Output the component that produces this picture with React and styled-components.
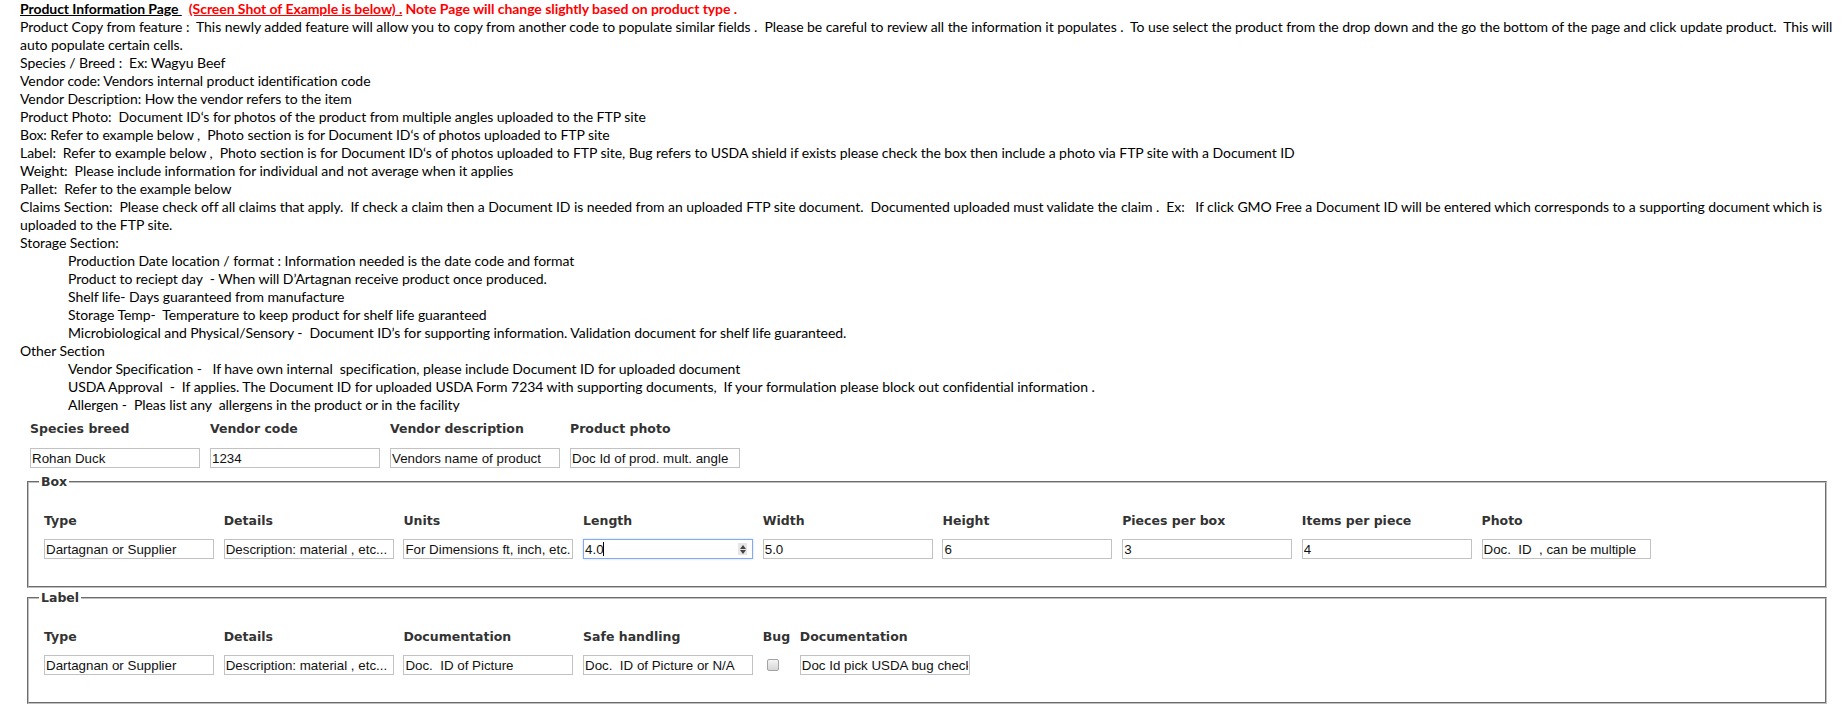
import React from 'react'
import styled, { createGlobalStyle } from 'styled-components';

const GlobalStyle = createGlobalStyle`
  html, body {
    margin: 0;
    padding: 0;
    background: #fff;
  }
  body {
    overflow: hidden;
  }
`;

const Page = styled.div`
  width: 1842px;
  box-sizing: border-box;
  padding-left: 20px;
`;

const Notes = styled.div`
  font-family: Lato, "Open Sans", sans-serif;
  font-size: 14px;
  line-height: 18px;
  letter-spacing: -0.06px;
  color: #000;
`;

const Line = styled.div`
  white-space: pre;
  padding-left: ${p => (p.$indent ? '48px' : '0')};
`;

const Title = styled.span`
  font-weight: 700;
  text-decoration: underline;
`;

const Warn = styled.span`
  font-weight: 700;
  color: #ff0000;
  text-decoration: ${p => (p.$under ? 'underline' : 'none')};
`;

const FieldLabel = styled.div`
  font-family: "DejaVu Sans", Verdana, sans-serif;
  font-weight: 700;
  font-size: 12.5px;
  line-height: 18px;
  color: #333;
  white-space: nowrap;
`;

const TopRow = styled.div`
  display: flex;
  gap: 10px;
  margin: 6px 0 0 10px;
`;

const Column = styled.div`
  display: flex;
  flex-direction: column;
  gap: ${p => p.$gap}px;
`;

const TextInput = styled.input`
  box-sizing: border-box;
  width: 170px;
  height: 20px;
  margin: 0;
  padding: 1px 1px;
  border: 1px solid #c2c2c2;
  border-radius: 0;
  background: #fff;
  font-family: "Liberation Sans", Arial, sans-serif;
  font-size: 13.33px;
  color: #111;
  outline: none;
`;

const FocusWrap = styled.div`
  position: relative;
  width: 170px;
  height: 20px;
`;

const FocusInput = styled(TextInput)`
  border-color: #86aaf0;
  box-shadow: 0 0 2px #bcd2f8;
`;

const Caret = styled.span`
  position: absolute;
  left: 20px;
  top: 3px;
  width: 1px;
  height: 14px;
  background: #000;
`;

const Spinner = styled.div`
  position: absolute;
  right: 6px;
  top: 4px;
  width: 9px;
  height: 12px;
  background: #e6e6e6;
  display: flex;
  flex-direction: column;
  align-items: center;
  justify-content: center;
  gap: 1px;
`;

const Arrow = styled.span`
  width: 0;
  height: 0;
  border-left: 3px solid transparent;
  border-right: 3px solid transparent;
  ${p => (p.$down ? 'border-top: 4px solid #444;' : 'border-bottom: 4px solid #444;')}
`;

const Group = styled.fieldset`
  margin: ${p => p.$top}px 15px 0 7px;
  padding: 0 10px;
  border: 2px groove #c0c0c0;
  min-width: 0;
`;

const Legend = styled.legend`
  padding: 0 2px;
  font-family: "DejaVu Sans", Verdana, sans-serif;
  font-weight: 700;
  font-size: 12.5px;
  line-height: 16px;
  color: #333;
`;

const FieldRow = styled.div`
  display: flex;
  gap: 9.7px;
  padding: 22px 0 27px 5px;
`;

const CheckCell = styled.div`
  height: 20px;
  display: flex;
  align-items: center;
  padding-left: 4px;
`;

const Check = styled.input`
  appearance: none;
  box-sizing: border-box;
  width: 12px;
  height: 12px;
  margin: 0;
  border: 1px solid #a3a3a3;
  border-radius: 2px;
  background: linear-gradient(#f4f4f4, #d6d6d6);
`;

const notes = [
  { text: 'Product Copy from feature :  This newly added feature will allow you to copy from another code to populate similar fields .  Please be careful to review all the information it populates .  To use select the product from the drop down and the go the bottom of the page and click update product.  This will' },
  { text: 'auto populate certain cells.' },
  { text: 'Species / Breed :  Ex: Wagyu Beef' },
  { text: 'Vendor code: Vendors internal product identification code' },
  { text: 'Vendor Description: How the vendor refers to the item' },
  { text: 'Product Photo:  Document ID‘s for photos of the product from multiple angles uploaded to the FTP site' },
  { text: 'Box: Refer to example below ,  Photo section is for Document ID‘s of photos uploaded to FTP site' },
  { text: 'Label:  Refer to example below ,  Photo section is for Document ID‘s of photos uploaded to FTP site, Bug refers to USDA shield if exists please check the box then include a photo via FTP site with a Document ID' },
  { text: 'Weight:  Please include information for individual and not average when it applies' },
  { text: 'Pallet:  Refer to the example below' },
  { text: 'Claims Section:  Please check off all claims that apply.  If check a claim then a Document ID is needed from an uploaded FTP site document.  Documented uploaded must validate the claim .  Ex:   If click GMO Free a Document ID will be entered which corresponds to a supporting document which is' },
  { text: 'uploaded to the FTP site.' },
  { text: 'Storage Section:' },
  { text: 'Production Date location / format : Information needed is the date code and format', indent: true },
  { text: 'Product to reciept day  - When will D’Artagnan receive product once produced.', indent: true },
  { text: 'Shelf life- Days guaranteed from manufacture', indent: true },
  { text: 'Storage Temp-  Temperature to keep product for shelf life guaranteed', indent: true },
  { text: 'Microbiological and Physical/Sensory -  Document ID’s for supporting information. Validation document for shelf life guaranteed.', indent: true },
  { text: 'Other Section' },
  { text: 'Vendor Specification -   If have own internal  specification, please include Document ID for uploaded document', indent: true },
  { text: 'USDA Approval  -  If applies. The Document ID for uploaded USDA Form 7234 with supporting documents,  If your formulation please block out confidential information .', indent: true },
  { text: 'Allergen -  Pleas list any  allergens in the product or in the facility', indent: true },
];

const topFields = [
  { label: 'Species breed', value: 'Rohan Duck' },
  { label: 'Vendor code', value: '1234' },
  { label: 'Vendor description', value: 'Vendors name of product' },
  { label: 'Product photo', value: 'Doc Id of prod. mult. angle' },
];

const boxFields = [
  { label: 'Type', value: 'Dartagnan or Supplier' },
  { label: 'Details', value: 'Description: material , etc...' },
  { label: 'Units', value: 'For Dimensions ft, inch, etc..' },
  { label: 'Length', value: '4.0', focused: true },
  { label: 'Width', value: '5.0' },
  { label: 'Height', value: '6' },
  { label: 'Pieces per box', value: '3' },
  { label: 'Items per piece', value: '4' },
  { label: 'Photo', value: 'Doc.  ID  , can be multiple', width: 169 },
];

const labelFields = [
  { label: 'Type', value: 'Dartagnan or Supplier' },
  { label: 'Details', value: 'Description: material , etc...' },
  { label: 'Documentation', value: 'Doc.  ID of Picture' },
  { label: 'Safe handling', value: 'Doc.  ID of Picture or N/A' },
  { label: 'Bug', check: true },
  { label: 'Documentation', value: 'Doc Id pick USDA bug check', width: 170 },
];

function Field({ field, gap }) {
  let control;
  if (field.check) {
    control = (
      <CheckCell>
        <Check type="checkbox" readOnly />
      </CheckCell>
    );
  } else if (field.focused) {
    control = (
      <FocusWrap>
        <FocusInput defaultValue={field.value} />
        <Caret />
        <Spinner>
          <Arrow />
          <Arrow $down />
        </Spinner>
      </FocusWrap>
    );
  } else {
    control = (
      <TextInput
        defaultValue={field.value}
        style={field.width ? { width: field.width } : undefined}
      />
    );
  }
  return (
    <Column $gap={gap}>
      <FieldLabel>{field.label}</FieldLabel>
      {control}
    </Column>
  );
}

export default function App() {
  return (
    <>
      <GlobalStyle />
      <Page>
        <Notes>
          <Line>
            <Title>Product Information Page </Title>
            {'  '}
            <Warn $under>(Screen Shot of Example is below) .</Warn>
            <Warn> Note Page will change slightly based on product type .</Warn>
          </Line>
          {notes.map((n, i) => (
            <Line key={i} $indent={n.indent}>{n.text}</Line>
          ))}
        </Notes>

        <TopRow>
          {topFields.map(f => (
            <Field key={f.label} field={f} gap={10} />
          ))}
        </TopRow>

        <Group $top={6}>
          <Legend>Box</Legend>
          <FieldRow>
            {boxFields.map(f => (
              <Field key={f.label} field={f} gap={9} />
            ))}
          </FieldRow>
        </Group>

        <Group $top={2}>
          <Legend>Label</Legend>
          <FieldRow>
            {labelFields.map((f, i) => (
              <Field key={i} field={f} gap={9} />
            ))}
          </FieldRow>
        </Group>
      </Page>
    </>
  )
}
